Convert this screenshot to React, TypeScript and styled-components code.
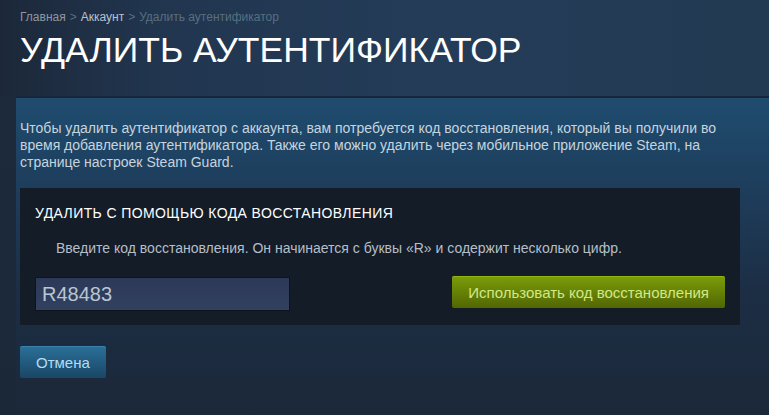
import * as React from "react";
import styled, { createGlobalStyle } from "styled-components";

const GlobalStyle = createGlobalStyle`
    html, body {
        margin: 0;
        padding: 0;
        background: #1b2838;
    }
    body {
        font-family: "Liberation Sans", Arial, sans-serif;
    }
`;

const App: React.FC = () => {
    const [code, setCode] = React.useState("R48483");
    return (
        <>
            <GlobalStyle />
            <Page>
                <Header>
                    <Crumbs>
                        <Crumb href="#">Главная</Crumb>
                        <Sep>&gt;</Sep>
                        <Crumb href="#">Аккаунт</Crumb>
                        <Sep>&gt;</Sep>
                        <Current>Удалить аутентификатор</Current>
                    </Crumbs>
                    <Title>УДАЛИТЬ АУТЕНТИФИКАТОР</Title>
                </Header>
                <Body>
                    <Gutter />
                    <Content>
                        <Intro>
                            Чтобы удалить аутентификатор с аккаунта, вам потребуется код
                            восстановления, который вы получили во время добавления
                            аутентификатора. Также его можно удалить через мобильное
                            приложение Steam, на странице настроек Steam Guard.
                        </Intro>
                        <Panel>
                            <PanelTitle>Удалить с помощью кода восстановления</PanelTitle>
                            <Hint>
                                Введите код восстановления. Он начинается с буквы «R» и
                                содержит несколько цифр.
                            </Hint>
                            <CodeRow>
                                <CodeInput
                                    type="text"
                                    value={code}
                                    onChange={(e) => setCode(e.target.value)}
                                />
                                <GreenButton>Использовать код восстановления</GreenButton>
                            </CodeRow>
                        </Panel>
                        <BlueButton>Отмена</BlueButton>
                    </Content>
                </Body>
            </Page>
        </>
    );
};

const Page = styled.div`
    width: 769px;
    min-height: 415px;
    overflow: hidden;
    display: flex;
    flex-direction: column;
`;

const Header = styled.div`
    height: 96px;
    box-sizing: border-box;
    padding: 10px 20px 0;
    background: linear-gradient(
        90deg,
        #1c2839 0%,
        #21354f 20%,
        #243c58 55%,
        #233a53 100%
    );
`;

const Crumbs = styled.div`
    font-size: 12px;
    line-height: 14px;
    color: #8f98a0;
`;

const Crumb = styled.a`
    color: #8f98a0;
    text-decoration: none;
    &:nth-of-type(2) {
        color: #b8c2cc;
    }
`;

const Sep = styled.span`
    color: #56707f;
    margin: 0 4px;
`;

const Current = styled.span`
    color: #56707f;
`;

const Title = styled.h1`
    margin: 4px 0 0;
    font-size: 35.5px;
    line-height: 44px;
    font-weight: normal;
    color: #ffffff;
`;

const Body = styled.div`
    flex: 1;
    display: flex;
`;

const Gutter = styled.div`
    width: 16px;
    background: linear-gradient(180deg, #1c2a3c 0%, #1b2838 100%);
`;

const Content = styled.div`
    flex: 1;
    padding: 22px 29px 30px 4px;
    border-top: 2px solid #18253a;
    background: linear-gradient(
        180deg,
        #1f4c6f 0%,
        #1e3f5e 25%,
        #1c2e45 60%,
        #1b2838 100%
    );
`;

const Intro = styled.p`
    margin: 0 0 17px;
    font-size: 14px;
    line-height: 17px;
    color: #c6d4df;
`;

const Panel = styled.div`
    background: #141c27;
    padding: 17px 15px 14px;
`;

const PanelTitle = styled.div`
    font-size: 14px;
    line-height: 17px;
    letter-spacing: 0.4px;
    text-transform: uppercase;
    color: #ffffff;
`;

const Hint = styled.div`
    margin: 18px 0 20px 21px;
    font-size: 14px;
    line-height: 17px;
    color: #b4bfc9;
`;

const CodeRow = styled.div`
    display: flex;
    align-items: flex-start;
    justify-content: space-between;
`;

const CodeInput = styled.input`
    width: 255px;
    height: 34px;
    box-sizing: border-box;
    margin: 0;
    padding: 0 6px;
    border: 1px solid #0e141d;
    background: linear-gradient(180deg, #2c3958 0%, #32415f 100%);
    color: #b8c6d4;
    font-family: "Liberation Sans", Arial, sans-serif;
    font-size: 20px;
    outline: 0;
`;

const GreenButton = styled.button`
    height: 32px;
    margin-top: -1px;
    padding: 0 16px;
    border: 0;
    border-radius: 2px;
    background: linear-gradient(180deg, #7a9a08 5%, #536904 95%);
    box-shadow: inset 0 1px 0 rgba(190, 230, 40, 0.35);
    color: #d2e885;
    font-family: "Liberation Sans", Arial, sans-serif;
    font-size: 15px;
    cursor: pointer;
`;

const BlueButton = styled.button`
    margin-top: 21px;
    height: 32px;
    padding: 0 16px;
    border: 0;
    border-radius: 2px;
    background: linear-gradient(180deg, #2a6e96 5%, #1a4868 95%);
    box-shadow: inset 0 1px 0 rgba(120, 190, 240, 0.25);
    color: #b4dcf5;
    font-family: "Liberation Sans", Arial, sans-serif;
    font-size: 15px;
    cursor: pointer;
`;

export default App;
